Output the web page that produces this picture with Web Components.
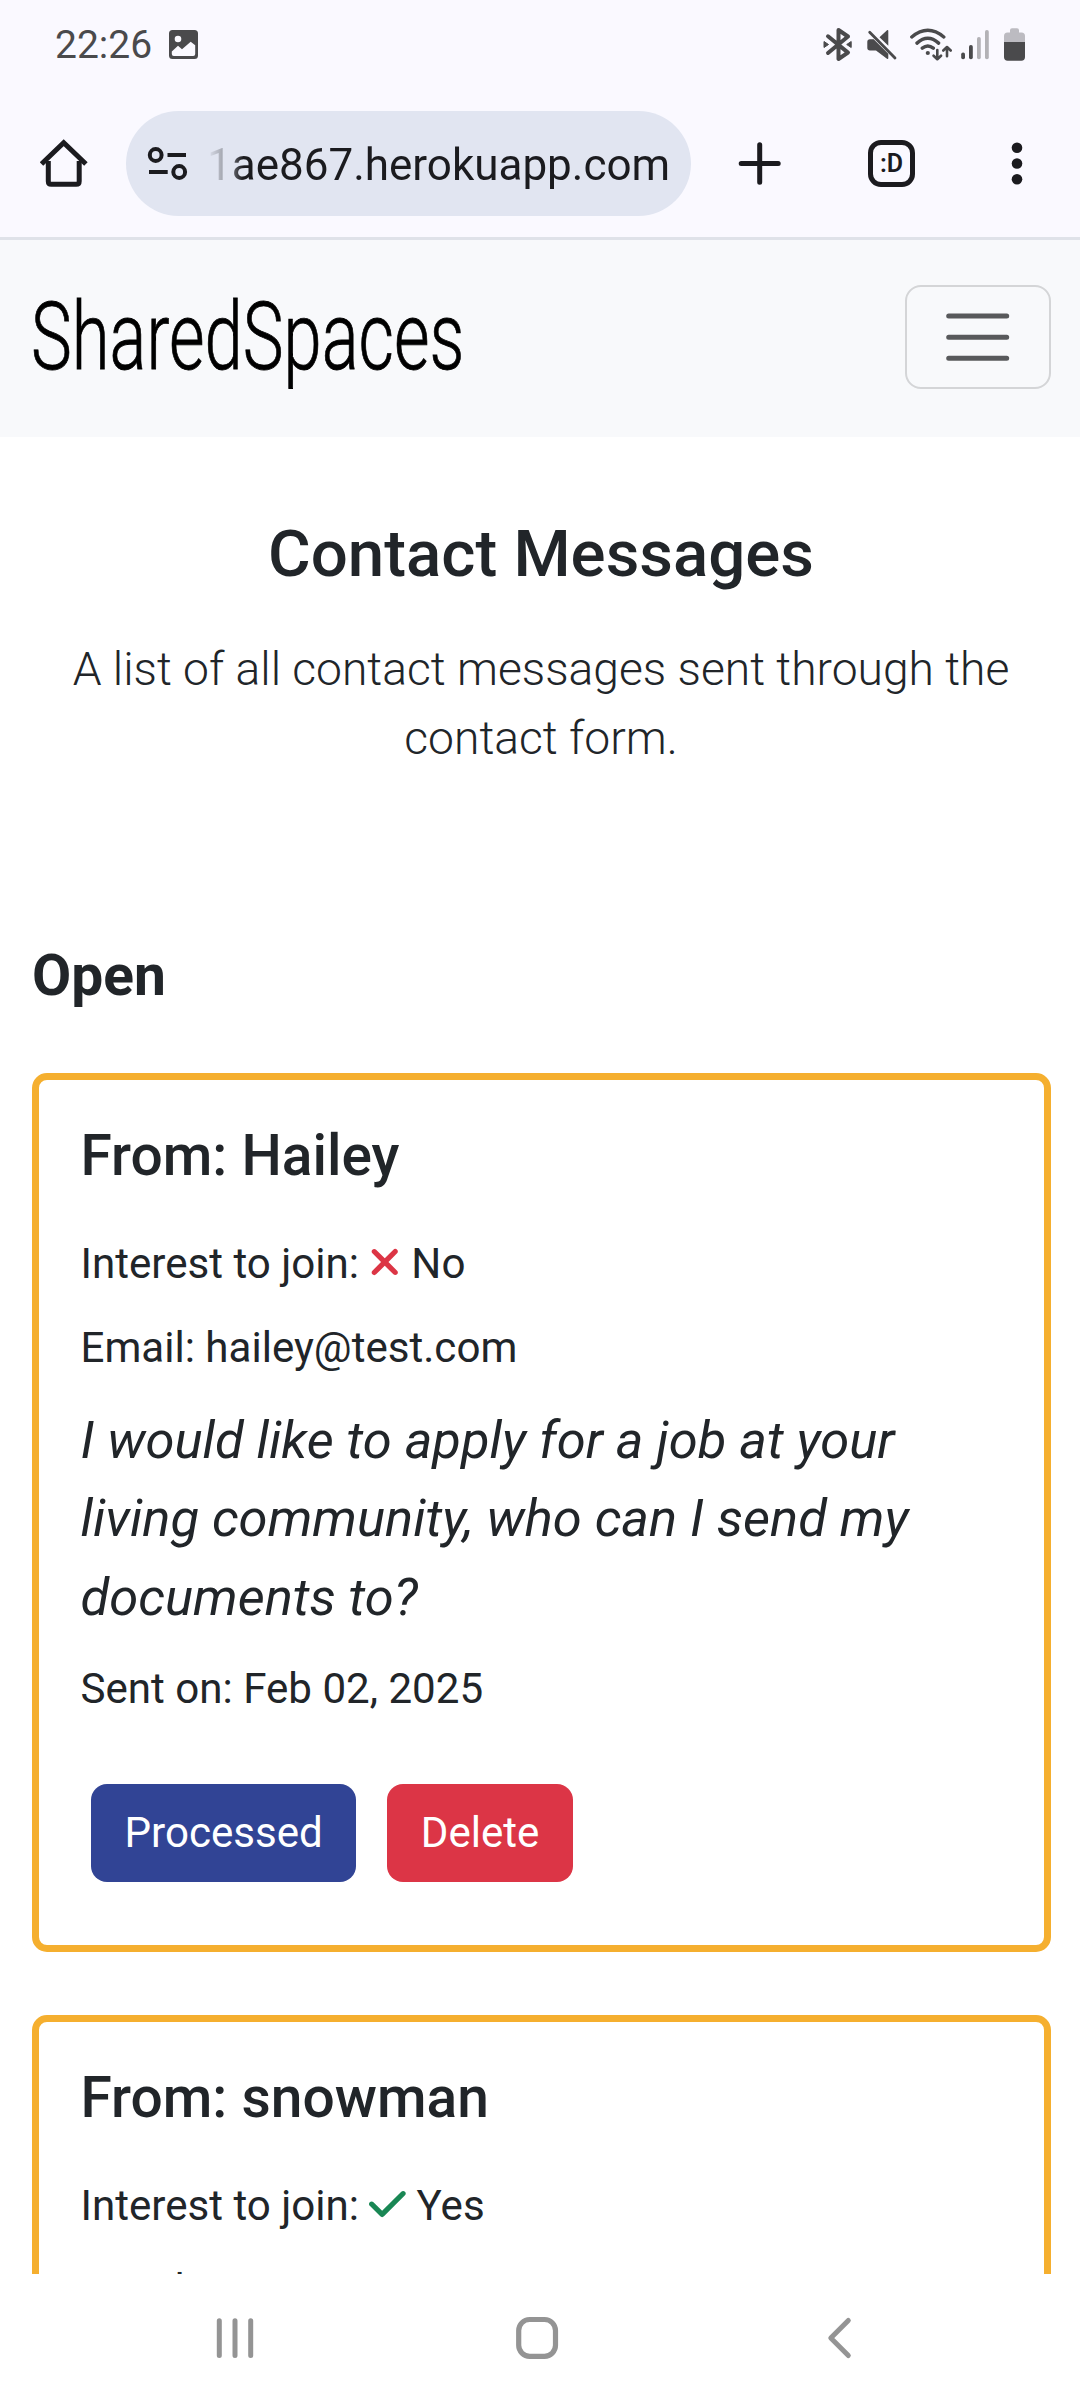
<!DOCTYPE html>
<html lang="en">
<head>
<meta charset="utf-8">
<title>SharedSpaces</title>
<style>
  body { margin: 0; background: #fff; font-family: Roboto, "Liberation Sans", sans-serif; color: #212529; }
</style>
</head>
<body>
<phone-screen>
  <status-bar slot="top" time="22:26"></status-bar>
  <browser-bar slot="top" address="1ae867.herokuapp.com" tabs=":D"></browser-bar>
  <site-nav brand="SharedSpaces"></site-nav>
  <page-intro>
    <span slot="title">Contact Messages</span>
    A list of all contact messages sent through the contact form.
  </page-intro>
  <message-list label="Open">
    <message-card from="Hailey" interest="no" email="hailey@test.com" sent="Feb 02, 2025">I would like to apply for a job at your living community, who can I send my documents to?</message-card>
    <message-card from="snowman" interest="yes" email="" preview></message-card>
  </message-list>
  <system-nav slot="bottom"></system-nav>
</phone-screen>

<script>
const define = (name, render) => customElements.define(name, class extends HTMLElement {
  connectedCallback() {
    if (this.shadowRoot) return;
    this.attachShadow({ mode: 'open' }).innerHTML = render(this);
  }
});

const stroke = (w, c = 'currentColor') => `fill="none" stroke="${c}" stroke-width="${w}" stroke-linecap="round" stroke-linejoin="round"`;
const ICONS = {
  image: ['169 30 29 29', `<path fill="currentColor" fill-rule="evenodd" d="M172.500 30h22a3.500 3.500 0 0 1 3.500 3.500v22a3.500 3.500 0 0 1-3.500 3.500h-22a3.500 3.500 0 0 1-3.500-3.500v-22a3.500 3.500 0 0 1 3.500-3.500zM178 35.700a3.300 3.300 0 1 0 0 6.600a3.300 3.300 0 0 0 0-6.600zM171.800 51.500V54a2 2 0 0 0 2 2h19.400a2 2 0 0 0 2-2v-8.700l-4.500-3.600l-8.700 7.600l-4-3.500z"/>`],
  bluetooth: ['823 27 29 35', `<path ${stroke(4)} d="M828 36.300L848 52.600L838.500 59V30L848 36.500L828 53"/><path fill="currentColor" d="M824 41.500l4.500 3l-4.500 3zM851.200 41.500l-4.500 3l4.500 3z" stroke="currentColor" stroke-width="1" stroke-linejoin="round"/>`],
  mute: ['866 27 32 35', `<path fill="currentColor" d="M879.500 37.200L887 30.300q1.300-.8 1.300.7V45.700zM870 39.200h3.700L888.300 53.800V58q0 1.500-1.300.7L876 50.500h-6q-2.700 0-2.700-2.700v-6q0-2.600 2.700-2.600z"/><path ${stroke(2.8)} d="M869.700 32.200L895 58"/>`],
  wifi: ['909 27 43 35', `<g ${stroke(3.4)}><path d="M911.800 37q16-13.400 32 0M917 43.100q10.800-9.500 21.600 0M922.300 48.200q5.500-4.400 11 0"/></g><circle cx="927.800" cy="53" r="2.100" fill="currentColor"/><g ${stroke(2.6)}><path d="M937.300 50v9M933.600 55.700l3.700 3.500l3.700-3.500M947 56.200v-9M943.300 50.500l3.700-3.500l3.700 3.500"/></g>`],
  signal: ['960 29 30 31', `<g fill="currentColor"><rect x="961.200" y="52.500" width="3.800" height="6.700" rx="1.800"/><rect x="969" y="45" width="3.800" height="14.200" rx="1.800"/><g opacity=".4"><rect x="977" y="37" width="3.800" height="22.200" rx="1.800"/><rect x="985" y="30" width="3.800" height="29.200" rx="1.800"/></g></g>`],
  battery: ['1003 27 23 35', `<path fill="#bcbbc1" d="M1004 42v-6q0-3.500 3.500-3.500h2.500v-2.200q0-2 2-2h5q2 0 2 2v2.200h2.500q3.500 0 3.500 3.500v6z"/><path fill="currentColor" d="M1004 42h21v15q0 3.700-3.700 3.700h-13.600q-3.700 0-3.700-3.700z"/>`],
  home: ['40 139 48 49', `<path fill="none" stroke="currentColor" stroke-width="5" stroke-linejoin="round" d="M48.300 161V181.300q0 3 3 3h24.900q3 0 3-3V161"/><path fill="none" stroke="currentColor" stroke-width="5" d="M41.500 164L63.700 142.800L85.900 164"/>`],
  tune: ['147 146 41 35', `<g fill="none" stroke="currentColor" stroke-width="4"><circle cx="155.700" cy="155" r="5.900"/><circle cx="179.200" cy="172" r="5.900"/><path d="M167.500 155H186M149 172h18.700"/></g>`],
  plus: ['738 142 43 43', `<path ${stroke(5)} d="M741.200 163.500h37M759.700 144.800v37.400"/>`],
  dots: ['1011 142 12 43', `<g fill="currentColor"><circle cx="1017" cy="147.800" r="5.300"/><circle cx="1017" cy="163.500" r="5.300"/><circle cx="1017" cy="179.200" r="5.300"/></g>`],
  menu: ['945 310 66 55', `<path ${stroke(5)} d="M948.700 316h58M948.700 337.200h58M948.700 358.200h58"/>`],
  recents: ['216 2316 38 44', `<path ${stroke(5)} d="M219.300 2320.800v34.600M235 2320.800v34.600M250.700 2320.800v34.600"/>`],
  square: ['515 2316 44 44', `<rect x="518.700" y="2319.500" width="36.800" height="36.800" rx="11" ${stroke(5.2)}/>`],
  back: ['826 2316 28 44', `<path ${stroke(5)} d="M848.300 2320.500L830.800 2338L848.300 2355.500"/>`],
  xmark: ['0 0 384 512', `<path fill="currentColor" d="M342.600 150.600c12.500-12.500 12.500-32.800 0-45.300s-32.800-12.500-45.300 0L192 210.700 86.600 105.400c-12.500-12.500-32.800-12.500-45.300 0s-12.500 32.800 0 45.300L146.700 256 41.400 361.400c-12.500 12.500-12.500 32.800 0 45.300s32.800 12.500 45.300 0L192 301.300 297.400 406.600c12.500 12.500 32.800 12.500 45.300 0s12.500-32.800 0-45.300L237.300 256 342.600 150.600z"/>`],
  check: ['0 0 448 512', `<path fill="currentColor" d="M438.600 105.400c12.500 12.500 12.500 32.800 0 45.300l-256 256c-12.500 12.500-32.800 12.500-45.300 0l-128-128c-12.500-12.500-12.500-32.800 0-45.300s32.800-12.500 45.300 0L160 338.700 393.400 105.400c12.500-12.500 32.800-12.500 45.300 0z"/>`],
};

define('ui-icon', el => {
  const [box, art] = ICONS[el.getAttribute('name')];
  const [, , w, h] = box.split(' ').map(Number);
  const k = el.hasAttribute('height') ? el.getAttribute('height') / h : 1;
  return `<style>:host{display:inline-block;flex:none}svg{display:block}</style>
    <svg width="${w * k}" height="${h * k}" viewBox="${box}">${art}</svg>`;
});

define('phone-screen', () => `
  <style>
    :host{display:flex;flex-direction:column;width:1080px;height:2400px;overflow:hidden;background:#fff}
    main{flex:1;min-height:0;overflow:hidden}
  </style>
  <slot name="top"></slot><main><slot></slot></main><slot name="bottom"></slot>`);

define('status-bar', el => `
  <style>
    :host{display:flex;align-items:center;justify-content:space-between;box-sizing:border-box;height:89px;flex:none;padding:0 54px 0 55px;background:#faf9ff;color:#4a4a4c;font-size:39px}
    div{display:flex;align-items:center}
    .left{gap:17px}
    .right{gap:0}
    .right ui-icon+ui-icon{margin-left:14px}
    .right ui-icon:nth-child(3){margin-left:11px}
    .right ui-icon:nth-child(4){margin-left:8px}
    .right ui-icon:nth-child(5){margin-left:13px}
  </style>
  <div class="left"><span>${el.getAttribute('time')}</span><ui-icon name="image"></ui-icon></div>
  <div class="right"><ui-icon name="bluetooth"></ui-icon><ui-icon name="mute"></ui-icon><ui-icon name="wifi"></ui-icon><ui-icon name="signal"></ui-icon><ui-icon name="battery"></ui-icon></div>`);

define('browser-bar', el => `
  <style>
    :host{display:flex;align-items:center;box-sizing:border-box;height:151px;flex:none;padding:0 0 0 40px;background:#faf9ff;color:#1b1b1f;border-bottom:3px solid #dfe2e9}
    .address{display:flex;align-items:center;box-sizing:border-box;width:565px;height:105px;margin:0 47px 0 38px;padding:0 20px 0 21px;border-radius:53px;background:#e1e5f1}
    .text{flex:1;margin-left:19px;padding-top:3px;font-size:44px;line-height:60px;white-space:nowrap;overflow:hidden;
      -webkit-mask-image:linear-gradient(90deg,transparent 0,rgba(0,0,0,.35) 18px,#000 36px);mask-image:linear-gradient(90deg,transparent 0,rgba(0,0,0,.35) 18px,#000 36px)}
    .tabs{display:flex;align-items:center;justify-content:center;box-sizing:border-box;width:47px;height:47px;margin:0 96px 0 87px;border:5px solid;border-radius:13px;font-size:25px;font-weight:600}
  </style>
  <ui-icon name="home"></ui-icon>
  <div class="address"><ui-icon name="tune"></ui-icon><div class="text">${el.getAttribute('address')}</div></div>
  <ui-icon name="plus"></ui-icon>
  <div class="tabs">${el.getAttribute('tabs')}</div>
  <ui-icon name="dots"></ui-icon>`);

define('site-nav', el => `
  <style>
    :host{display:flex;align-items:center;justify-content:space-between;box-sizing:border-box;height:197px;padding:0 29px 0 31px;background:#f8f9fb}
    .brand{width:430px;margin-bottom:4px;font-size:95px;font-weight:300;line-height:110px;color:#000;white-space:nowrap;-webkit-text-stroke:.8px #000;transform:scaleX(.724);transform-origin:0 50%}
    .toggle{display:flex;align-items:center;justify-content:center;box-sizing:border-box;width:146px;height:104px;margin-bottom:3px;border:2px solid #d4d5d7;border-radius:16px;color:#58595b}
  </style>
  <div class="brand">${el.getAttribute('brand')}</div>
  <div class="toggle"><ui-icon name="menu"></ui-icon></div>`);

define('page-intro', () => `
  <style>
    :host{display:block;padding:78px 30.500px 0 32.500px;text-align:center}
    h2{margin:0 0 41px;font-size:65.400px;font-weight:500;line-height:78.500px}
    p{margin:0;font-size:46.200px;font-weight:300;line-height:69px}
  </style>
  <h2><slot name="title"></slot></h2><p><slot></slot></p>`);

define('message-list', el => `
  <style>
    :host{display:flex;flex-direction:column;gap:63px;padding:169px 29px 0 32px}
    h4{margin:0;font-size:56.900px;font-weight:700;line-height:68px}
  </style>
  <h4>${el.getAttribute('label')}</h4><slot></slot>`);

define('action-button', el => `
  <style>
    :host{display:flex;align-items:center;height:98px;padding:0 33.500px;border-radius:16px;background:${el.getAttribute('fill')};color:#fff;font-size:42.100px}
    span{line-height:63px;padding-bottom:1px}
  </style><span><slot></slot></span>`);

define('message-card', el => {
  const yes = el.getAttribute('interest') === 'yes';
  const rest = el.hasAttribute('preview') ? '' : `
  <blockquote><slot></slot></blockquote>
  <p>Sent on: ${el.getAttribute('sent')}</p>
  <div class="actions"><action-button fill="#314495">Processed</action-button><action-button fill="#dc3546">Delete</action-button></div>`;
  return `
  <style>
    :host{display:flex;flex-direction:column;gap:21px;box-sizing:border-box;padding:42px 42px 42px 41.500px;border:7px solid #f5af2f;border-radius:15px;font-size:42.100px;line-height:63px}
    h4{margin:0 0 21px;font-size:56.900px;font-weight:500;line-height:68px}
    p,blockquote{margin:0}
    blockquote{margin:1px 0 -1px;font-size:52.500px;font-style:italic;line-height:78.750px}
    ui-icon{vertical-align:-5px;color:${yes ? '#198754' : '#dc3545'}}
    .actions{display:flex;gap:31px;margin:43px 0 21px 10.500px}
  </style>
  <h4>From: ${el.getAttribute('from')}</h4>
  <p>Interest to join: <ui-icon name="${yes ? 'check' : 'xmark'}" height="42"></ui-icon> ${yes ? 'Yes' : 'No'}</p>
  <p>Email: ${el.getAttribute('email')}</p>${rest}`;
});

define('system-nav', () => `
  <style>
    :host{display:flex;align-items:center;justify-content:space-between;box-sizing:border-box;height:126px;flex:none;padding:2px 226px 0 216px;background:#fff;color:#949494}
    ui-icon[name=recents]{margin-right:-6px}
  </style>
  <ui-icon name="recents"></ui-icon><ui-icon name="square"></ui-icon><ui-icon name="back"></ui-icon>`);
</script>
</body>
</html>
